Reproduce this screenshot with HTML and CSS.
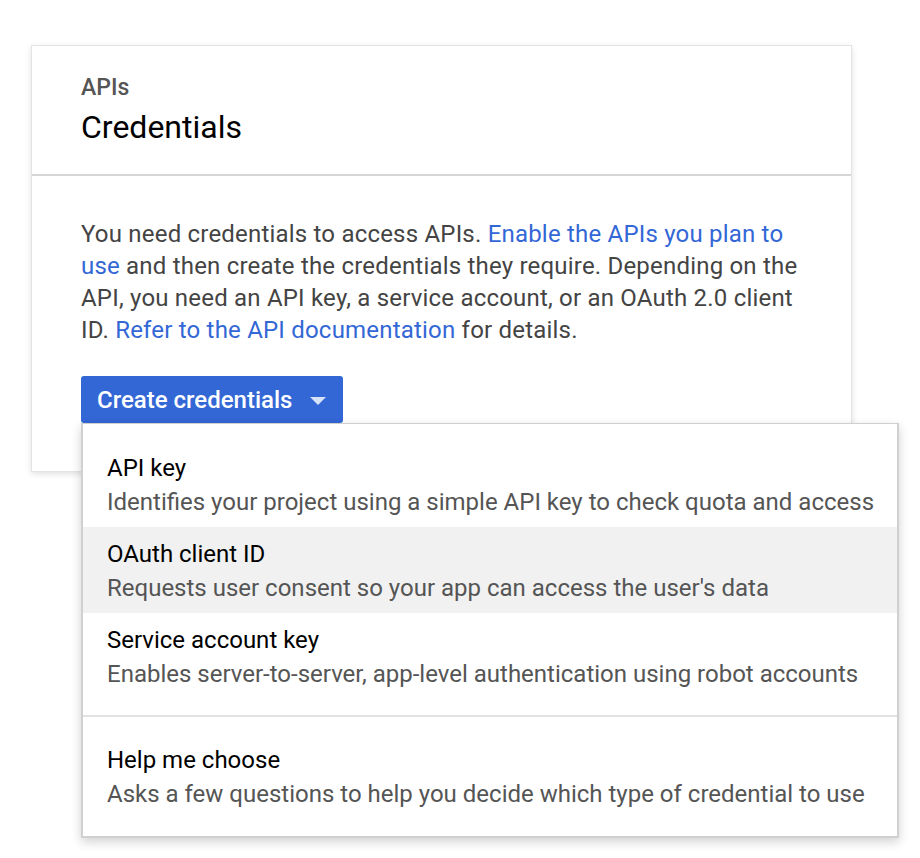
FILE: index.html
```html
<!DOCTYPE html>
<html lang="en">
<head>
<meta charset="utf-8">
<title>Credentials</title>
<link rel="stylesheet" href="styles.css">
</head>
<body>
<div class="page">
  <section class="card">
    <header class="card-header">
      <div class="eyebrow">APIs</div>
      <h1 class="title">Credentials</h1>
    </header>
    <div class="card-body">
      <p class="intro">You need credentials to access APIs. <a href="#" class="link">Enable the APIs you plan to use</a> and then create the credentials they require. Depending on the API, you need an API key, a service account, or an OAuth 2.0 client ID. <a href="#" class="link">Refer to the API documentation</a> for details.</p>
      <div class="menu-anchor">
        <button class="btn-primary" type="button">Create credentials <span class="caret"></span></button>
        <div class="menu">
          <div class="menu-group">
            <div class="menu-item">
              <div class="item-title">API key</div>
              <div class="item-desc">Identifies your project using a simple API key to check quota and access</div>
            </div>
            <div class="menu-item active">
              <div class="item-title">OAuth client ID</div>
              <div class="item-desc">Requests user consent so your app can access the user's data</div>
            </div>
            <div class="menu-item">
              <div class="item-title">Service account key</div>
              <div class="item-desc">Enables server-to-server, app-level authentication using robot accounts</div>
            </div>
          </div>
          <div class="menu-group">
            <div class="menu-item">
              <div class="item-title">Help me choose</div>
              <div class="item-desc">Asks a few questions to help you decide which type of credential to use</div>
            </div>
          </div>
        </div>
      </div>
    </div>
  </section>
</div>
</body>
</html>
```

FILE: styles.css
```css
* { box-sizing: border-box; }
html, body { margin: 0; padding: 0; background: #fff; }
body {
  min-height: 858px;
  font-family: Roboto, "Liberation Sans", Arial, sans-serif;
  color: #212121;
}
.page {
  min-height: 858px;
  padding: 45px 0 0 31px;
}
.card {
  width: 821px;
  background: #fff;
  border: 1px solid #e4e4e4;
  box-shadow: 0 2px 6px rgba(0,0,0,0.12);
}
.card-header {
  padding: 29px 49px 29px;
  border-bottom: 2px solid #d6d6d6;
}
.eyebrow {
  font-size: 23px;
  font-weight: 500;
  color: #555;
  line-height: 26px;
}
.title {
  margin: 8px 0 0;
  font-size: 32px;
  font-weight: 400;
  line-height: 36px;
  color: #000;
}
.card-body {
  padding: 42px 49px 48px;
}
.intro {
  margin: 0;
  font-size: 24px;
  line-height: 32px;
  letter-spacing: 0.2px;
  color: #444;
}
.link {
  color: #3367d6;
  text-decoration: none;
}
.menu-anchor {
  position: relative;
  margin-top: 30px;
}
.btn-primary {
  display: inline-flex;
  align-items: center;
  height: 47px;
  padding: 0 17px 0 16px;
  border: none;
  border-radius: 3px;
  background: #3367d6;
  color: #fff;
  font-family: Roboto, "Liberation Sans", Arial, sans-serif;
  font-size: 24px;
  font-weight: 500;
}
.caret {
  width: 0;
  height: 0;
  border-left: 8px solid transparent;
  border-right: 8px solid transparent;
  border-top: 8px solid #d6e2f7;
  margin-left: 18px;
  margin-top: 2px;
}
.menu {
  position: absolute;
  left: 0;
  top: 47px;
  width: 818px;
  background: #fff;
  border: 2px solid #d0d0d0;
  border-top-width: 1px;
  box-shadow: 0 4px 10px rgba(0,0,0,0.18);
  z-index: 2;
}
.menu-group {
  padding: 17px 0 16px;
}
.menu-group + .menu-group {
  border-top: 2px solid #e2e2e2;
  padding-top: 16px;
  padding-bottom: 17px;
}
.menu-item {
  height: 86px;
  padding: 10px 24px 0;
}
.menu-item.active {
  background: #f1f1f1;
}
.item-title {
  font-size: 24px;
  line-height: 34px;
  color: #000;
}
.item-desc {
  font-size: 24px;
  line-height: 34px;
  color: #555;
  white-space: nowrap;
}
```
